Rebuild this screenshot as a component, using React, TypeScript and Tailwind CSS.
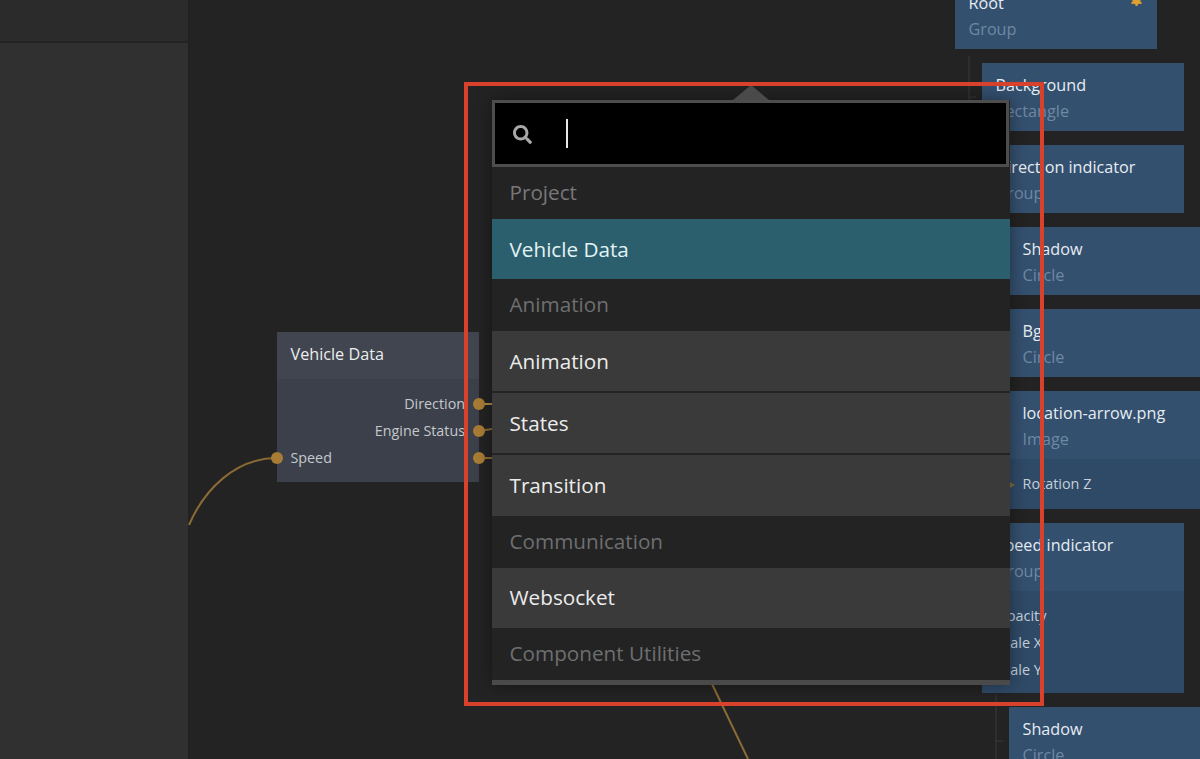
import { FaSearch } from "react-icons/fa";

const FONT = "font-['Open_Sans',sans-serif]";

const ROWS: { label: string; cls: string }[] = [
  { label: "Project", cls: "h-[52px] text-[#77787a]" },
  { label: "Vehicle Data", cls: "h-[60px] pt-[2px] bg-[#2c5f6e] text-[#e2f3f5]" },
  { label: "Animation", cls: "h-[52px] text-[#6e6f70]" },
  { label: "Animation", cls: "h-[60px] pt-[2px] bg-[#3a3a3a] text-[#ececec]" },
  { label: "States", cls: "h-[62px] pt-[2px] bg-[#3a3a3a] border-t-2 border-[#242424] text-[#ececec]" },
  { label: "Transition", cls: "h-[63px] bg-[#3a3a3a] border-t-2 border-[#242424] text-[#ececec]" },
  { label: "Communication", cls: "h-[52px] pb-[1px] text-[#6e6f70]" },
  { label: "Websocket", cls: "h-[60px] bg-[#3a3a3a] text-[#ececec]" },
  { label: "Component Utilities", cls: "h-[52px] text-[#6e6f70]" },
];

const Card = ({
  top,
  left,
  width,
  height,
  title,
  sub,
  props,
}: {
  top: number;
  left: number;
  width: number;
  height: number;
  title: string;
  sub: string;
  props?: string[];
}) => (
  <div
    className="absolute bg-[#34506f] flex flex-col"
    style={{ top, left, width, height }}
  >
    <div className="h-[68px] shrink-0 pl-[13.5px] pt-[9px]">
      <div className="text-[16.2px] leading-[26px] text-[#e6ecf2]">{title}</div>
      <div className="text-[16.2px] leading-[26px] text-[#6f88a3]">{sub}</div>
    </div>
    {props && (
      <div className="flex-1 bg-[#2f4a67] pl-[13.5px] pt-[11px]">
        {props.map((p) => (
          <div key={p} className="text-[14.4px] leading-[27px] text-[#c3cfdb]">
            {p}
          </div>
        ))}
      </div>
    )}
  </div>
);

export default function App() {
  return (
    <div className={`${FONT} w-[1200px] h-[759px] overflow-hidden flex bg-[#232323]`}>
      {/* left panel */}
      <aside className="w-[190px] shrink-0 flex flex-col border-r-2 border-[#212121]">
        <div className="h-[43px] bg-[#2b2b2b] border-b-2 border-[#232323]" />
        <div className="flex-1 bg-[#303030]" />
      </aside>

      {/* node canvas */}
      <main className="relative flex-1 -ml-[190px]">
        <svg className="absolute inset-0" width="1200" height="759" fill="none">
          <path d="M189 525 C204 490 235 458 277 458" stroke="#8a6a35" strokeWidth="2" />
          <path d="M712 684 L748 759" stroke="#8a6a35" strokeWidth="2" />
          <path d="M479 404 H492" stroke="#b08a4a" strokeWidth="2" />
          <path d="M479 431 L492 429" stroke="#8a6a35" strokeWidth="2" />
          <path d="M479 458 L492 458" stroke="#8a6a35" strokeWidth="2" />
          <path d="M969 56 V100 M969 97 H976" stroke="#3a3a3a" strokeWidth="1" />
          <path d="M996 695 V759 M996 741 H1003" stroke="#3a3a3a" strokeWidth="1" />
        </svg>

        {/* graph node */}
        <div className="absolute left-[277px] top-[332px] w-[202px] h-[150px] bg-[#3c404b]">
          <div className="h-[47px] bg-[#41454f] pl-[13.5px] pt-[10px] text-[16.2px] leading-[24px] text-[#eceef0]">
            Vehicle Data
          </div>
          <div className="pt-[12px] text-[14.3px] text-[#c5c8cc]">
            <div className="h-[27px] leading-[26px] text-right pr-[14px]">Direction</div>
            <div className="h-[26px] leading-[26px] text-right pr-[14px]">Engine Status</div>
            <div className="h-[27px] leading-[27px] pl-[13.5px]">Speed</div>
          </div>
          <span className="absolute left-[-6px] top-[120px] size-[12px] rounded-full bg-[#a87c34]" />
          <span className="absolute right-[-6px] top-[66px] size-[12px] rounded-full bg-[#a87c34]" />
          <span className="absolute right-[-6px] top-[93px] size-[12px] rounded-full bg-[#a87c34]" />
          <span className="absolute right-[-6px] top-[120px] size-[12px] rounded-full bg-[#a87c34]" />
        </div>

        {/* hierarchy cards */}
        <Card top={-19} left={955} width={202} height={68} title="Root" sub="Group" />
        <svg className="absolute left-[1130px] top-0" width="13" height="7" viewBox="0 0 13 7">
          <circle cx="6.5" cy="0.5" r="4" fill="#e0a030" />
          <path d="M6.5 0 V6 M1.5 3.5 L11.5 -2.5 M1.5 -2.5 L11.5 3.5" stroke="#e0a030" strokeWidth="2" />
        </svg>
        <Card top={63} left={982} width={202} height={68} title="Background" sub="Rectangle" />
        <Card top={145} left={982} width={202} height={68} title="Direction indicator" sub="Group" />
        <Card top={227} left={1009} width={191} height={68} title="Shadow" sub="Circle" />
        <Card top={309} left={1009} width={191} height={68} title="Bg" sub="Circle" />
        <Card top={391} left={1009} width={191} height={118} title="location-arrow.png" sub="Image" props={["Rotation Z"]} />
        <span className="absolute left-[1010px] top-[482px] border-y-[3px] border-l-[5px] border-y-transparent border-l-[#7a6c3c]" />
        <Card top={523} left={982} width={202} height={170} title="Speed indicator" sub="Group" props={["Opacity", "Scale X", "Scale Y"]} />
        <Card top={707} left={1009} width={191} height={68} title="Shadow" sub="Circle" />

        {/* node picker popup */}
        <div className="absolute left-[492px] top-[100px] w-[518px] flex flex-col bg-[#232323] text-[20.7px] shadow-[0_0_16px_rgba(0,0,0,0.4)]">
          <span className="absolute left-[241px] top-[-15px] border-x-[18px] border-b-[15px] border-x-transparent border-b-[#4a4a4a]" />
          <div className="h-[67px] mr-[1px] shrink-0 bg-black border-[3px] border-[#4d4d4d] flex items-center pl-[18px]">
            <FaSearch size={19} className="text-[#a8a8a8] mt-[1px]" />
            <span className="ml-[34px] w-[2px] h-[29px] bg-[#e8e8e8]" />
          </div>
          {ROWS.map((r, i) => (
            <div key={i} className={`${r.cls} shrink-0 flex items-center pl-[17.5px]`}>
              {r.label}
            </div>
          ))}
          <div className="h-[5px] bg-[#4a4a4a]" />
        </div>

        {/* annotation box */}
        <div className="absolute left-[464px] top-[82px] w-[580px] h-[624px] border-[4px] border-[#d8412c]" />
      </main>
    </div>
  );
}
